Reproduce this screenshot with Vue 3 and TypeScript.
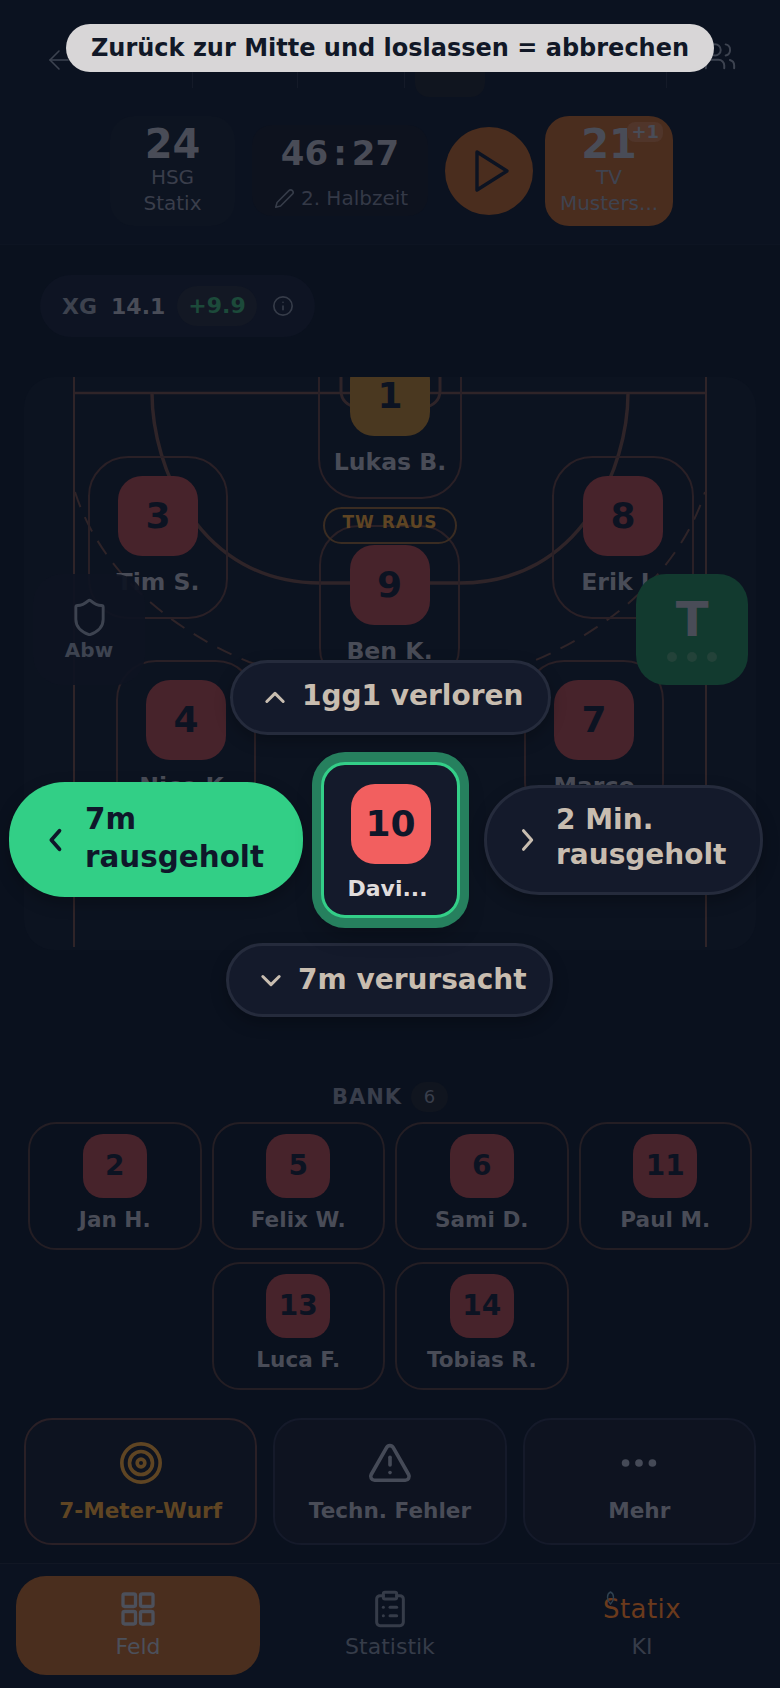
<script setup lang="ts">
interface Player {
  nr: number
  name: string
}

interface CourtPlayer extends Player {
  x: number
  y: number
  w: number
  keeper?: boolean
}

const court: CourtPlayer[] = [
  { nr: 1, name: 'Lukas B.', x: 294, y: -41, w: 144, keeper: true },
  { nr: 3, name: 'Tim S.', x: 64, y: 79, w: 140 },
  { nr: 8, name: 'Erik L.', x: 528, y: 79, w: 142 },
  { nr: 9, name: 'Ben K.', x: 295, y: 148, w: 141 },
  { nr: 4, name: 'Nico K.', x: 92, y: 283, w: 140 },
  { nr: 7, name: 'Marco', x: 500, y: 283, w: 140 },
]

const bench: Player[] = [
  { nr: 2, name: 'Jan H.' },
  { nr: 5, name: 'Felix W.' },
  { nr: 6, name: 'Sami D.' },
  { nr: 11, name: 'Paul M.' },
  { nr: 13, name: 'Luca F.' },
  { nr: 14, name: 'Tobias R.' },
]
</script>

<template>
  <div class="screen">
    <header class="top">
      <svg class="back" viewBox="0 0 24 24" fill="none" stroke="#3d4350" stroke-width="1.6" stroke-linecap="round" stroke-linejoin="round">
        <path d="M21 12H3" />
        <path d="M12 3l-9 9 9 9" />
      </svg>
      <span class="seg s1"></span>
      <span class="seg s2"></span>
      <span class="seg s3"></span>
      <span class="top-chip"></span>
      <span class="seg s4"></span>
      <svg class="people" viewBox="0 0 24 24" fill="none" stroke="#3d4350" stroke-width="1.4" stroke-linecap="round" stroke-linejoin="round">
        <path d="M15 20v-2a4 4 0 0 0-4-4H6a4 4 0 0 0-4 4v2" />
        <circle cx="8.5" cy="7" r="4" />
        <path d="M22 20v-2a4 4 0 0 0-3-3.9" />
        <path d="M16 3.1a4 4 0 0 1 0 7.8" />
      </svg>
    </header>

    <section class="score">
      <div class="team">
        <b class="goals">24</b>
        <span>HSG</span>
        <span>Statix</span>
      </div>
      <div class="clock">
        <b class="time">46<i>:</i>27</b>
        <span class="half">
          <svg viewBox="0 0 24 24" fill="none" stroke="#363c49" stroke-width="1.8" stroke-linecap="round" stroke-linejoin="round">
            <path d="M17 3a2.8 2.8 0 0 1 4 4L7.5 20.5 2 22l1.5-5.5z" />
          </svg>
          2. Halbzeit
        </span>
      </div>
      <div class="play">
        <svg viewBox="0 0 24 24" fill="none" stroke="#0c1322" stroke-width="1.7" stroke-linecap="round" stroke-linejoin="round">
          <path d="M6 2.500l15 9.500-15 9.500z" />
        </svg>
      </div>
      <div class="team away">
        <b class="goals">21</b>
        <em class="plus">+1</em>
        <span>TV</span>
        <span>Musters...</span>
      </div>
    </section>

    <div class="xg">
      <span class="xg-label">XG</span>
      <b>14.1</b>
      <span class="xg-diff">+9.9</span>
      <svg viewBox="0 0 24 24" fill="none" stroke="#363c49" stroke-width="1.8" stroke-linecap="round">
        <circle cx="12" cy="12" r="10" />
        <path d="M12 16v-4" />
        <path d="M12 8h.01" />
      </svg>
    </div>

    <section class="field">
      <svg class="lines" viewBox="0 0 732 573" fill="none" stroke="#2f2428" stroke-width="2">
        <path d="M50 0V570" />
        <path d="M682 0V570" />
        <path d="M50 16H682" stroke-width="2.500" />
        <path d="M128 16C128 90 175 206 296 206H436C557 206 604 90 604 16" stroke-width="3.500" />
        <path d="M51 115C75 190 140 250 225 285C270 300 462 300 507 285C592 250 657 190 681 115" stroke-dasharray="16 11" />
        <path d="M317 0V14a16 16 0 0 0 16 16H400a16 16 0 0 0 16-16V0" stroke-width="3" />
      </svg>
      <div
        v-for="p in court"
        :key="p.nr"
        class="node"
        :style="{ left: p.x + 'px', top: p.y + 'px', width: p.w + 'px' }"
      >
        <div class="badge" :class="{ keeper: p.keeper }">{{ p.nr }}</div>
        <div class="node-name">{{ p.name }}</div>
      </div>
      <div class="tw-raus">TW RAUS</div>
    </section>

    <section class="bank">
      <div class="bank-title">
        <span>BANK</span>
        <i>6</i>
      </div>
      <div class="bank-grid">
        <div v-for="p in bench" :key="p.nr" class="sub">
          <div class="sub-badge">{{ p.nr }}</div>
          <div class="sub-name">{{ p.name }}</div>
        </div>
      </div>
    </section>

    <section class="actions">
      <div class="action seven">
        <svg viewBox="0 0 24 24" fill="none" stroke="#5f4523" stroke-width="1.9">
          <circle cx="12" cy="12" r="10" />
          <circle cx="12" cy="12" r="6" />
          <circle cx="12" cy="12" r="2" />
        </svg>
        <span>7-Meter-Wurf</span>
      </div>
      <div class="action">
        <svg viewBox="0 0 24 24" fill="none" stroke="#454a57" stroke-width="1.9" stroke-linecap="round" stroke-linejoin="round">
          <path d="M21.7 18l-8-14a2 2 0 0 0-3.5 0l-8 14A2 2 0 0 0 4 21h16a2 2 0 0 0 1.7-3z" />
          <path d="M12 9v4" />
          <path d="M12 17h.01" />
        </svg>
        <span>Techn. Fehler</span>
      </div>
      <div class="action">
        <svg viewBox="0 0 24 24" fill="#454a57">
          <circle cx="5" cy="12" r="2" />
          <circle cx="12" cy="12" r="2" />
          <circle cx="19" cy="12" r="2" />
        </svg>
        <span>Mehr</span>
      </div>
    </section>

    <nav class="tabs">
      <div class="tab active">
        <svg viewBox="0 0 24 24" fill="none" stroke="#4c505b" stroke-width="2">
          <rect x="3" y="3" width="7.5" height="7.5" rx="1" />
          <rect x="13.5" y="3" width="7.5" height="7.5" rx="1" />
          <rect x="3" y="13.5" width="7.5" height="7.5" rx="1" />
          <rect x="13.5" y="13.5" width="7.5" height="7.5" rx="1" />
        </svg>
        <span>Feld</span>
      </div>
      <div class="tab">
        <svg viewBox="0 0 24 24" fill="none" stroke="#363c49" stroke-width="1.8" stroke-linecap="round" stroke-linejoin="round">
          <rect x="8" y="2" width="8" height="4" rx="1" />
          <path d="M16 4h2a2 2 0 0 1 2 2v14a2 2 0 0 1-2 2H6a2 2 0 0 1-2-2V6a2 2 0 0 1 2-2h2" />
          <path d="M12 11h4" />
          <path d="M12 16h4" />
          <path d="M8 11h.01" />
          <path d="M8 16h.01" />
        </svg>
        <span>Statistik</span>
      </div>
      <div class="tab">
        <div class="logo">
          <svg viewBox="0 0 12 14" fill="none" stroke="#2f4150" stroke-width="1.4">
            <path d="M6 1C2 3 2 9 6 13C10 9 10 3 6 1Z" />
          </svg>
          <span>Statix</span>
        </div>
        <span>KI</span>
      </div>
    </nav>

    <!-- Overlay beim Ziehen eines Spielers -->
    <div class="side abw">
      <svg viewBox="0 0 24 24" fill="none" stroke="#3d4350" stroke-width="1.7" stroke-linejoin="round">
        <path d="M20 13c0 5-3.5 7.5-7.7 9a1 1 0 0 1-.6 0C7.5 20.500 4 18 4 13V6a1 1 0 0 1 1-1c2 0 4.500-1.200 6.200-2.700a1.200 1.200 0 0 1 1.600 0C14.500 3.800 17 5 19 5a1 1 0 0 1 1 1z" />
      </svg>
      <span>Abw</span>
    </div>
    <div class="side tempo">
      <b>T</b>
      <div class="dots"><i></i><i></i><i></i></div>
    </div>

    <div class="choice up">
      <svg viewBox="0 0 24 24"><path d="M5 15l7-7 7 7" /></svg>
      <span>1gg1 verloren</span>
    </div>
    <div class="choice down">
      <svg viewBox="0 0 24 24"><path d="M5 9l7 7 7-7" /></svg>
      <span>7m verursacht</span>
    </div>
    <div class="choice left">
      <svg viewBox="0 0 24 24"><path d="M15 4l-7 8 7 8" /></svg>
      <span>7m<br />rausgeholt</span>
    </div>
    <div class="choice right">
      <svg viewBox="0 0 24 24"><path d="M9 4l7 8-7 8" /></svg>
      <span>2 Min.<br />rausgeholt</span>
    </div>

    <div class="dragged">
      <div class="dragged-badge">10</div>
      <div class="dragged-name">Davi...</div>
    </div>

    <div class="toast">Zurück zur Mitte und loslassen = abbrechen</div>
  </div>
</template>

<style>
html,
body {
  background: #0a111e;
}
</style>

<style scoped>
.screen {
  position: relative;
  width: 780px;
  height: 1688px;
  overflow: hidden;
  background: #0a111e;
  font-family: "DejaVu Sans", sans-serif;
  color: #494c57;
}

.top {
  display: flex;
  align-items: flex-start;
  height: 116px;
  box-sizing: border-box;
  padding: 48px 0 0 45px;
  background: #0b1220;
}
.back {
  width: 28px;
  height: 24px;
  flex: none;
}
.seg {
  height: 40px;
  border-right: 1px solid #141a28;
  box-sizing: border-box;
}
.s1 { width: 120px; }
.s2 { width: 105px; }
.s3 { width: 107px; }
.s4 { width: 182px; }
.top-chip {
  width: 70px;
  height: 49px;
  margin-left: 10px;
  border-radius: 0 0 14px 14px;
  background: #10151f;
}
.people {
  width: 34px;
  height: 34px;
  margin: -8px 0 0 36px;
  flex: none;
}

.score {
  display: flex;
  justify-content: center;
  align-items: center;
  padding: 0 0 19px 3px;
  height: 129px;
  box-sizing: border-box;
  border-bottom: 1px solid #0d1422;
  background: #0b1220;
}
.team {
  position: relative;
  display: flex;
  flex-direction: column;
  align-items: center;
  width: 125px;
  height: 110px;
  padding-top: 5px;
  box-sizing: border-box;
  border-radius: 24px;
  background: #0d1421;
  color: #3a3e4b;
  font-size: 20px;
}
.team span {
  line-height: 26px;
}
.goals {
  color: #494c57;
  font-size: 40px;
  line-height: 46px;
  margin-bottom: -3px;
}
.away {
  width: 128px;
  margin-left: 12px;
  background: #4a2d1e;
}
.away span {
  color: #3f4350;
}
.plus {
  position: absolute;
  top: 6px;
  right: 10px;
  padding: 0 4px;
  border-radius: 8px;
  background: #50352a;
  color: #494c57;
  font-size: 18px;
  line-height: 20px;
  font-style: normal;
  font-weight: 700;
}
.clock {
  display: flex;
  flex-direction: column;
  align-items: center;
  width: 176px;
  height: 91px;
  margin: 0 17px;
  padding-top: 8px;
  box-sizing: border-box;
  border-radius: 20px;
  background: #0d121e;
}
.time {
  font-size: 34px;
  line-height: 40px;
}
.time i {
  margin: 0 5px;
  font-style: normal;
}
.half {
  display: flex;
  align-items: center;
  gap: 6px;
  margin: 12px 0 0 2px;
  color: #343947;
  font-size: 20px;
  line-height: 26px;
}
.half svg {
  width: 21px;
  height: 21px;
}
.play {
  display: flex;
  align-items: center;
  justify-content: center;
  width: 88px;
  height: 88px;
  border-radius: 50%;
  background: #4a2d1e;
}
.play svg {
  width: 48px;
  height: 48px;
}

.xg {
  display: flex;
  align-items: center;
  width: 275px;
  height: 62px;
  box-sizing: border-box;
  margin: 30px 0 40px 40px;
  padding-left: 22px;
  border-radius: 31px;
  background: #0e1423;
  font-size: 22px;
}
.xg-label {
  color: #3d424e;
  font-weight: 700;
  margin-right: 14px;
}
.xg-diff {
  margin: 0 15px 0 12px;
  padding: 0 11px;
  height: 40px;
  line-height: 40px;
  border-radius: 20px;
  background: #131824;
  color: #1c4a3a;
  font-weight: 700;
}
.xg svg {
  width: 22px;
  height: 22px;
}

.field {
  position: relative;
  width: 732px;
  height: 573px;
  margin-left: 24px;
  overflow: hidden;
  border-radius: 30px;
  background: #0c1320;
}
.lines {
  position: absolute;
  inset: 0;
  width: 100%;
  height: 100%;
}
.node {
  position: absolute;
  display: flex;
  flex-direction: column;
  align-items: center;
  height: 163px;
  box-sizing: border-box;
  padding-top: 18px;
  border: 2px solid #2a2026;
  border-radius: 40px;
}
.badge {
  width: 80px;
  height: 80px;
  line-height: 80px;
  flex: none;
  text-align: center;
  border-radius: 24px;
  background: #47232b;
  color: #0c1322;
  font-size: 36px;
  font-weight: 700;
}
.badge.keeper {
  background: #4a3820;
}
.node-name {
  margin-top: 13px;
  font-size: 23.6px;
  line-height: 26px;
  font-weight: 700;
  white-space: nowrap;
}
.tw-raus {
  position: absolute;
  left: 299px;
  top: 130px;
  width: 134px;
  height: 37px;
  line-height: 26px;
  box-sizing: border-box;
  text-align: center;
  border: 2px solid #3a2c22;
  border-radius: 19px;
  color: #5f4523;
  font-size: 17px;
  font-weight: 700;
  letter-spacing: 1px;
}

.bank {
  margin-top: 132px;
  padding: 0 28px;
}
.bank-title {
  display: flex;
  justify-content: center;
  align-items: center;
  gap: 9px;
  height: 30px;
  margin-bottom: 10px;
  color: #393e4b;
  font-size: 21px;
  font-weight: 700;
  letter-spacing: 1px;
}
.bank-title i {
  width: 37px;
  height: 30px;
  line-height: 30px;
  text-align: center;
  border-radius: 15px;
  background: #10151f;
  font-style: normal;
  font-size: 18px;
  font-weight: 400;
  letter-spacing: 0;
}
.bank-grid {
  display: flex;
  flex-wrap: wrap;
  justify-content: center;
  gap: 12px 10px;
}
.sub {
  display: flex;
  flex-direction: column;
  align-items: center;
  width: 173.5px;
  height: 128px;
  box-sizing: border-box;
  padding-top: 10px;
  border: 2px solid #241e24;
  border-radius: 28px;
}
.sub-badge {
  width: 64px;
  height: 64px;
  line-height: 64px;
  text-align: center;
  border-radius: 20px;
  background: #47232b;
  color: #0c1322;
  font-size: 28px;
  font-weight: 700;
}
.sub-name {
  margin-top: 9px;
  font-size: 21.6px;
  line-height: 26px;
  font-weight: 700;
}

.actions {
  display: grid;
  grid-template-columns: repeat(3, 1fr);
  gap: 16px;
  margin: 28px 24px 0;
}
.action {
  display: flex;
  flex-direction: column;
  align-items: center;
  height: 127px;
  box-sizing: border-box;
  padding-top: 20px;
  border: 2px solid #151a2a;
  border-radius: 28px;
  background: #0e1320;
  font-size: 21.6px;
  font-weight: 700;
  line-height: 26px;
}
.action svg {
  width: 46px;
  height: 46px;
  margin-bottom: 12px;
}
.action.seven {
  border-color: #2a2026;
  background: #0d1320;
  color: #5f4523;
}

.tabs {
  display: grid;
  grid-template-columns: repeat(3, 1fr);
  gap: 8px;
  height: 125px;
  box-sizing: border-box;
  margin-top: 18px;
  padding: 12px 16px 0;
  border-top: 1px solid #111724;
  background: #0b1220;
}
.tab {
  display: flex;
  flex-direction: column;
  align-items: center;
  height: 99px;
  box-sizing: border-box;
  padding-top: 13px;
  border-radius: 30px;
  color: #363c49;
  font-size: 22px;
  line-height: 28px;
}
.tab svg {
  width: 40px;
  height: 40px;
  margin-bottom: 4px;
}
.tab.active {
  background: #4a2e1e;
  color: #4c505b;
}
.logo {
  position: relative;
  display: flex;
  justify-content: center;
  height: 44px;
  color: #6b3a1c;
  font-size: 26px;
  line-height: 40px;
  letter-spacing: 0.4px;
}
.logo svg {
  position: absolute;
  left: 1px;
  top: 2px;
  width: 13px;
  height: 14px;
  margin: 0;
}

.side {
  position: absolute;
  top: 574px;
  display: flex;
  flex-direction: column;
  align-items: center;
  width: 112px;
  height: 111px;
  box-sizing: border-box;
  border-radius: 30px;
}
.abw {
  left: 33px;
  padding-top: 23px;
  background: rgba(14, 20, 34, 0.92);
  color: #3d4350;
  font-size: 20px;
  font-weight: 700;
}
.abw svg {
  width: 41px;
  height: 41px;
}
.tempo {
  left: 636px;
  padding-top: 16px;
  background: #123a2f;
}
.tempo b {
  font-size: 48px;
  line-height: 58px;
}
.dots {
  display: flex;
  gap: 10px;
  margin-top: 4px;
}
.dots i {
  width: 10px;
  height: 10px;
  border-radius: 50%;
  background: #234239;
}

.choice {
  position: absolute;
  display: flex;
  align-items: center;
  box-sizing: border-box;
  border: 3px solid #252b3c;
  border-radius: 56px;
  background: #141a2b;
  color: #c8bdb0;
  font-size: 28px;
  font-weight: 700;
  line-height: 35px;
  box-shadow: 0 6px 16px rgba(0, 0, 0, 0.25);
}
.choice svg {
  flex: none;
  width: 28px;
  height: 28px;
  fill: none;
  stroke: currentColor;
  stroke-width: 2.6;
  stroke-linecap: round;
  stroke-linejoin: round;
}
.up {
  left: 230px;
  top: 660px;
  width: 321px;
  height: 75px;
  padding-left: 28px;
  gap: 13px;
}
.up span {
  margin-top: -5px;
}
.down {
  left: 226px;
  top: 943px;
  width: 327px;
  height: 74px;
  padding-left: 28px;
  gap: 13px;
}
.down span {
  margin-top: -2px;
}
.left {
  left: 9px;
  top: 782px;
  width: 294px;
  height: 115px;
  padding-left: 33px;
  gap: 15px;
  border: 0;
  background: #32cf86;
  color: #0f172a;
  font-size: 29.4px;
  line-height: 38px;
}
.left svg {
  stroke-width: 3.2;
}
.left span {
  margin-top: -4px;
}
.right {
  left: 484px;
  top: 785px;
  width: 279px;
  height: 110px;
  padding-left: 26px;
  gap: 15px;
}
.right span {
  margin-top: -6px;
}

.dragged {
  position: absolute;
  left: 321px;
  top: 762px;
  display: flex;
  flex-direction: column;
  align-items: center;
  width: 139px;
  height: 156px;
  box-sizing: border-box;
  padding-top: 19px;
  border: 3px solid #33cf88;
  border-radius: 24px;
  background: #141a2b;
  box-shadow: 0 -1px 0 9px #26805e, 0 1px 0 9px #26805e, 0 14px 24px rgba(0, 0, 0, 0.3);
}
.dragged-badge {
  width: 80px;
  height: 80px;
  line-height: 80px;
  text-align: center;
  border-radius: 24px;
  background: #f25f5f;
  color: #0f172a;
  font-size: 36px;
  font-weight: 700;
}
.dragged-name {
  margin: 12px 6px 0 0;
  color: #e0dcdc;
  font-size: 22px;
  line-height: 26px;
  font-weight: 700;
}

.toast {
  position: absolute;
  left: 66px;
  top: 24px;
  width: 648px;
  height: 48px;
  line-height: 48px;
  text-align: center;
  border-radius: 24px;
  background: #d8d6d7;
  color: #111827;
  font-size: 24px;
  font-weight: 700;
  white-space: nowrap;
}
</style>
